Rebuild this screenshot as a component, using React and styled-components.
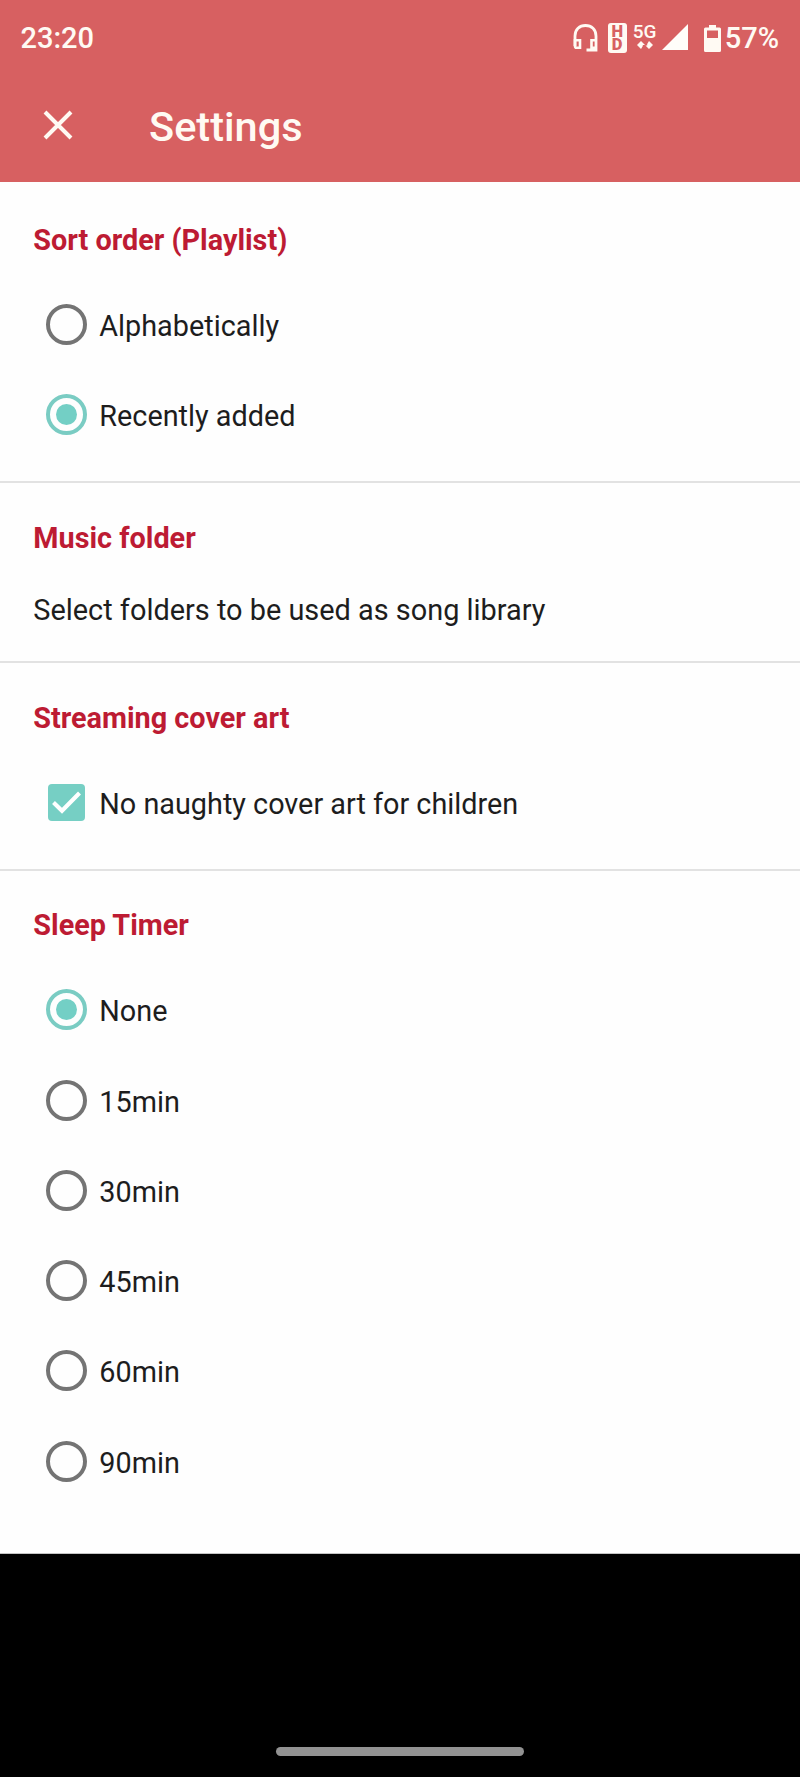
import React, { useState } from "react";
import styled, { createGlobalStyle } from "styled-components";

const GlobalStyle = createGlobalStyle`
  * { box-sizing: border-box; }
  body { margin: 0; background: #000; font-family: Roboto, "Liberation Sans", sans-serif; }
`;

const Screen = styled.div`
  display: flex;
  flex-direction: column;
  width: 800px;
  height: 1777px;
  background: #000;
`;

const Header = styled.header`
  height: 182px;
  flex: none;
  background: #d76061;
  color: #fffaf3;
`;

const StatusBar = styled.div`
  display: flex;
  justify-content: space-between;
  align-items: center;
  height: 76px;
  padding: 0 21px 0 20.5px;
  font-size: 29px;
  font-weight: 500;
`;

const Clock = styled.span`
  letter-spacing: 0;
`;

const StatusIcons = styled.div`
  display: flex;
  align-items: center;
  svg { display: block; }
`;

const HdBadge = styled.span`
  display: flex;
  flex-direction: column;
  align-items: center;
  justify-content: center;
  width: 19px;
  height: 30px;
  margin: 0 6px 0 10px;
  border-radius: 3px;
  background: #fffaf3;
  color: #d76061;
`;

const HdLetter = styled.span`
  font-size: 16.5px;
  font-weight: 900;
  line-height: 13.5px;
`;

const Network = styled.span`
  display: flex;
  flex-direction: column;
  align-items: center;
  width: 24px;
  height: 30px;
  margin-right: 5px;
  font-size: 19px;
  line-height: 18px;
`;

const Percent = styled.span`
  margin-left: 4px;
`;

const TitleBar = styled.div`
  display: flex;
  align-items: center;
  height: 98px;
  padding: 0 0 0 42px;
`;

const CloseButton = styled.button`
  display: flex;
  padding: 0;
  border: 0;
  background: none;
  color: inherit;
`;

const Title = styled.h1`
  margin: 3px 0 0 75px;
  font-size: 41.5px;
  line-height: 48px;
  font-weight: 500;
`;

const Content = styled.main`
  flex: none;
  height: 1371.6px;
  background: #fefefe;
  border-bottom: 1px solid #c4c4c4;
`;

const Section = styled.section`
  padding-top: ${(p) => (p.$first ? 40.8 : 37.6)}px;
  padding-bottom: ${(p) => p.$bottom ?? 21.2}px;
  border-bottom: ${(p) => (p.$last ? "0" : "2px solid #e2e2e2")};
`;

const SectionTitle = styled.h2`
  margin: 0;
  padding-left: 33.3px;
  color: #bd1b33;
  font-size: 28.8px;
  line-height: 34px;
  font-weight: 700;
`;

const Options = styled.div`
  padding: 22.4px 0 0 45.5px;
`;

const Option = styled.label`
  display: flex;
  align-items: center;
  height: 90.3px;
`;

const Label = styled.span`
  margin: 3px 0 0 12.8px;
  color: #1d1d1d;
  font-size: 28.8px;
  line-height: 34px;
`;

const Description = styled.p`
  margin: 38.9px 0 0;
  padding-left: 33.3px;
  color: #1d1d1d;
  font-size: 28.9px;
  line-height: 34px;
`;

const RadioRing = styled.span`
  display: flex;
  align-items: center;
  justify-content: center;
  width: 41px;
  height: 41px;
  border: 4px solid ${(p) => (p.$checked ? "#7accc3" : "#747474")};
  border-radius: 50%;
`;

const RadioDot = styled.span`
  width: 21px;
  height: 21px;
  border-radius: 50%;
  background: #73cfc5;
`;

const CheckBox = styled.span`
  display: flex;
  width: 37px;
  height: 37px;
  margin: 0 1.5px 0 2.5px;
  border-radius: 4px;
  background: #76cfc4;
`;

const HiddenInput = styled.input`
  display: none;
`;

const NavigationBar = styled.footer`
  display: flex;
  flex: 1;
  align-items: flex-end;
  justify-content: center;
  padding-bottom: 21px;
`;

const HomeHandle = styled.div`
  width: 248px;
  height: 9px;
  border-radius: 5px;
  background: #929292;
`;

function HeadsetIcon() {
  return (
    <svg width="25" height="30" viewBox="0 0 25 30" fill="none" stroke="currentColor">
      <path d="M2 23V13C2 6.5 6.5 2.5 12.5 2.5S23 6.5 23 13V27H13.5" strokeWidth="2.8" />
      <path d="M2 17.2H7V24.8H3.5Q2 24.8 2 23Z" strokeWidth="2.6" />
      <path d="M23 17.2H18.5V24.8H23" strokeWidth="2.6" />
    </svg>
  );
}

function DataArrows() {
  return (
    <svg width="16" height="8" viewBox="0 0 16 8" fill="currentColor">
      <path d="M4 0L8 4H5.8V5L4 8L0 4ZM12 0L16 4L12 8L8.5 4.5H10.2V3Z" />
    </svg>
  );
}

function SignalIcon() {
  return (
    <svg width="26" height="26" viewBox="0 0 26 26">
      <path d="M26 0V26H0Z" fill="#fffefa" />
    </svg>
  );
}

function BatteryIcon() {
  return (
    <svg width="17" height="27" viewBox="0 0 17 27">
      <path
        fill="#fffaf3"
        fillRule="evenodd"
        d="M5 0H12V2.5H15.5Q17 2.5 17 4V25.5Q17 27 15.5 27H1.5Q0 27 0 25.5V4Q0 2.5 1.5 2.5H5ZM3 5.5V13H14V5.5Z"
      />
    </svg>
  );
}

const SignalSlot = styled.span`
  margin: -2px 16px 0 0;
`;

function CloseIcon() {
  return (
    <svg width="32" height="32" viewBox="0 0 32 32" stroke="currentColor" strokeWidth="4">
      <path d="M3 3L29 29M29 3L3 29" />
    </svg>
  );
}

function CheckMark() {
  return (
    <svg width="37" height="37" viewBox="0 0 37 37" fill="none" stroke="#fff" strokeWidth="4.1">
      <path d="M5.5 18.5L14 26.8L31.5 9" />
    </svg>
  );
}

function RadioGroup({ name, options, initial }) {
  const [value, setValue] = useState(initial);
  return (
    <Options>
      {options.map((option) => (
        <Option key={option}>
          <HiddenInput
            type="radio"
            name={name}
            checked={value === option}
            onChange={() => setValue(option)}
          />
          <RadioRing $checked={value === option}>{value === option && <RadioDot />}</RadioRing>
          <Label>{option}</Label>
        </Option>
      ))}
    </Options>
  );
}

export default function App() {
  const [filtered, setFiltered] = useState(true);
  return (
    <Screen>
      <GlobalStyle />
      <Header>
        <StatusBar>
          <Clock>23:20</Clock>
          <StatusIcons>
            <HeadsetIcon />
            <HdBadge>
              <HdLetter>H</HdLetter>
              <HdLetter>D</HdLetter>
            </HdBadge>
            <Network>
              <span>5G</span>
              <DataArrows />
            </Network>
            <SignalSlot>
              <SignalIcon />
            </SignalSlot>
            <BatteryIcon />
            <Percent>57%</Percent>
          </StatusIcons>
        </StatusBar>
        <TitleBar>
          <CloseButton aria-label="Close">
            <CloseIcon />
          </CloseButton>
          <Title>Settings</Title>
        </TitleBar>
      </Header>
      <Content>
        <Section $first>
          <SectionTitle>Sort order (Playlist)</SectionTitle>
          <RadioGroup
            name="sort"
            options={["Alphabetically", "Recently added"]}
            initial="Recently added"
          />
        </Section>
        <Section $bottom={33.9}>
          <SectionTitle>Music folder</SectionTitle>
          <Description>Select folders to be used as song library</Description>
        </Section>
        <Section $bottom={21}>
          <SectionTitle>Streaming cover art</SectionTitle>
          <Options>
            <Option>
              <HiddenInput
                type="checkbox"
                checked={filtered}
                onChange={() => setFiltered(!filtered)}
              />
              <CheckBox>{filtered && <CheckMark />}</CheckBox>
              <Label>No naughty cover art for children</Label>
            </Option>
          </Options>
        </Section>
        <Section $last>
          <SectionTitle>Sleep Timer</SectionTitle>
          <RadioGroup
            name="sleep"
            options={["None", "15min", "30min", "45min", "60min", "90min"]}
            initial="None"
          />
        </Section>
      </Content>
      <NavigationBar>
        <HomeHandle />
      </NavigationBar>
    </Screen>
  );
}
